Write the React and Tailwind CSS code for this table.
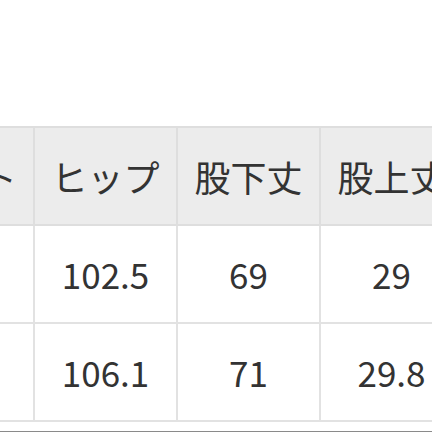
import React from 'react'

const headers = ['ウエスト', 'ヒップ', '股下丈', '股上丈']
const rows = [
  ['76', '102.5', '69', '29'],
  ['80', '106.1', '71', '29.8'],
]

export default function App() {
  return (
    <div
      className="w-[432px] h-[432px] overflow-hidden bg-white flex flex-col"
      style={{ fontFamily: '"Noto Sans CJK JP", "Noto Sans", sans-serif' }}
    >
      <div className="h-[126px] shrink-0" />
      <table className="table-fixed border-collapse ml-[-145px] w-[607px] text-[#333333]">
        <colgroup>
          <col className="w-[178px]" />
          <col className="w-[143px]" />
          <col className="w-[143px]" />
          <col className="w-[143px]" />
        </colgroup>
        <thead>
          <tr className="h-[98px]">
            {headers.map(h => (
              <th
                key={h}
                className="bg-[#ececec] border-2 border-[#dedede] text-[36px] font-normal text-center whitespace-nowrap p-0"
              >
                {h}
              </th>
            ))}
          </tr>
        </thead>
        <tbody>
          {rows.map((r, i) => (
            <tr key={i} className="h-[98px]">
              {r.map((v, j) => (
                <td
                  key={j}
                  className="border-2 border-[#e2e2e2] text-[35px] text-center whitespace-nowrap p-0"
                >
                  {v}
                </td>
              ))}
            </tr>
          ))}
        </tbody>
      </table>
      <div className="mt-auto h-px bg-[#8a8a8a] shrink-0" />
    </div>
  )
}
